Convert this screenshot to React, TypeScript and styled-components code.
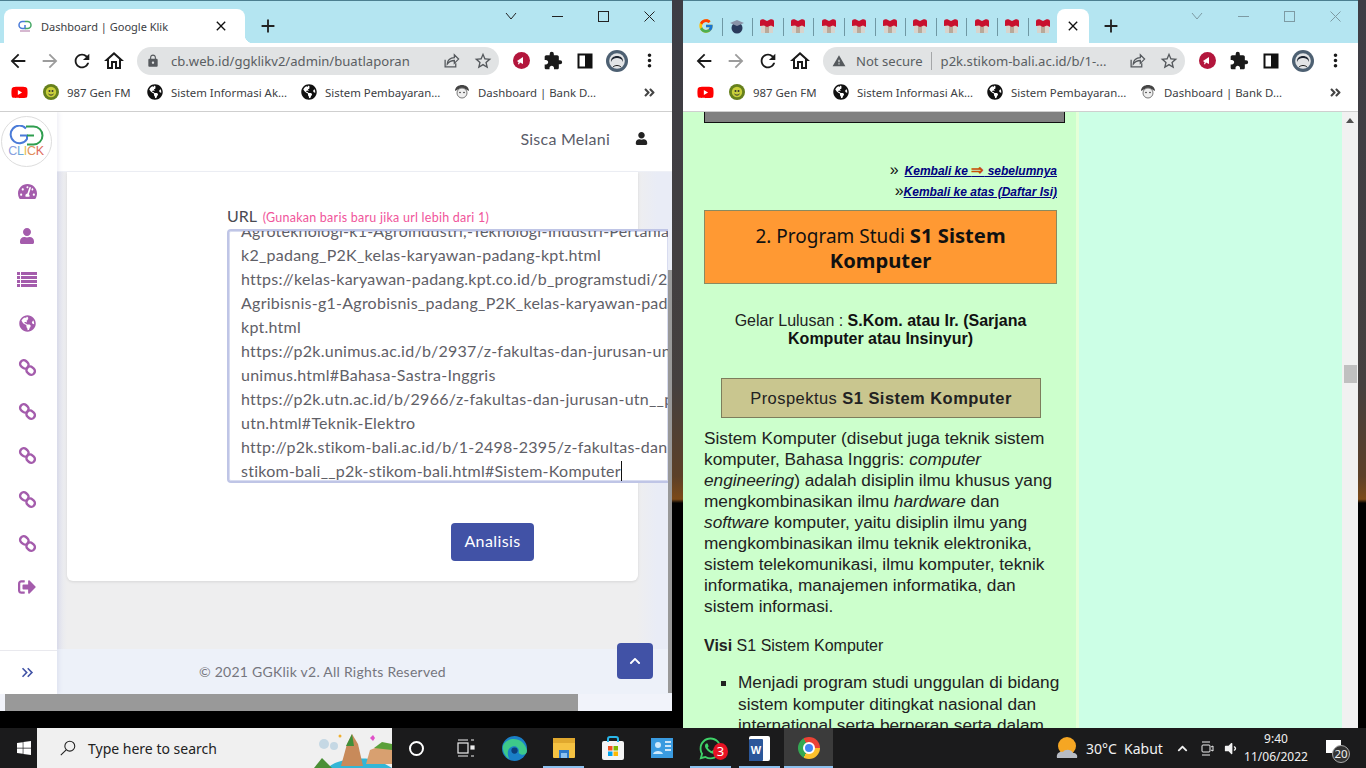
import React from "react";
import styled, { createGlobalStyle } from "styled-components";
import {
  MdArrowBack, MdArrowForward, MdRefresh, MdOutlineHome, MdLock, MdStarBorder, MdExtension, MdMoreVert, MdWarning, MdClose, MdAdd,
  MdKeyboardDoubleArrowRight,
} from "react-icons/md";
import { FaTachometerAlt, FaUser, FaGlobeAmericas, FaSignOutAlt, FaYoutube, FaWindows, FaWhatsapp, FaAngleDoubleRight, FaChevronUp, FaVolumeDown } from "react-icons/fa";
import { FcGoogle } from "react-icons/fc";

const Global = createGlobalStyle`
  html, body { margin: 0; padding: 0; width: 1366px; height: 768px; overflow: hidden; background: #000; }
  * { box-sizing: border-box; }
`;

const UI = `"Noto Sans", "Open Sans", sans-serif`;
const NUN = `"Lato", "Open Sans", sans-serif`;
const ARIAL = `"Liberation Sans", Arial, sans-serif`;

const Desktop = styled.div`
  position: relative; width: 1366px; height: 768px; overflow: hidden;
  background: linear-gradient(180deg, #3d3d45 0, #45403f 50%, #5c4028 62%, #7c4a18 65%, #000 65.5%);
`;
const Win = styled.div<{ $x: number; $w: number; $h: number }>`
  position: absolute; left: ${p => p.$x}px; top: 0; width: ${p => p.$w}px; height: ${p => p.$h}px;
  display: flex; flex-direction: column; overflow: hidden; background: #fff;
`;
const TitleBar = styled.div<{ $pl?: number }>`
  height: 43px; flex: none; background: #b4e5f1; border-top: 1px solid #4c7f90; display: flex; align-items: flex-end; position: relative; padding-left: ${p => p.$pl ?? 0}px;
`;
const Tab = styled.div`
  position: relative; width: 241px; height: 34px; margin-left: 4px; background: #fff; border-radius: 8px 8px 0 0;
  display: flex; align-items: center; padding-left: 13px; font: 11px ${UI}; color: #3c4043;
  &::after { content: ""; position: absolute; right: -8px; bottom: 0; width: 8px; height: 8px;
    background: radial-gradient(circle at 100% 0, transparent 8px, #fff 8.5px); }
`;
const TabTitle = styled.span` margin-left: 8px; width: 172px; white-space: nowrap; `;
const TabClose = styled.span` display: flex; color: #111; font-size: 16px; `;
const NewTab = styled.span<{ $m: number }>` display: flex; height: 34px; align-items: center; margin-left: ${p => p.$m}px; color: #222; font-size: 22px; `;
const MiniTab = styled.div`
  width: 30.6px; height: 34px; display: flex; align-items: center; justify-content: center; position: relative; flex: none;
  & + &::before { content: ""; position: absolute; left: 0; top: 9px; height: 18px; width: 1px; background: #6f98a4; }
`;
const ActiveMini = styled.div`
  width: 32px; height: 34px; margin-left: -1px; flex: none; background: #fff; border-radius: 8px 8px 0 0; display: flex; align-items: center; justify-content: center; color: #111; font-size: 16px;
`;
const Caption = styled.div<{ $dim?: boolean }>`
  position: absolute; top: 0; right: 0; display: flex; height: 30px; color: ${p => (p.$dim ? "#7d9aa3" : "#222")};
`;
const CaptionBtn = styled.span` width: 46px; height: 30px; display: flex; align-items: center; justify-content: center; `;
const Toolbar = styled.div<{ $pl: number }>`
  height: 35px; flex: none; display: flex; align-items: center; padding-left: ${p => p.$pl}px; background: #fff;
`;
const NavBtn = styled.span<{ $off?: boolean; $s?: number }>`
  width: 32px; height: 32px; flex: none; display: flex; align-items: center; justify-content: center; color: ${p => (p.$off ? "#9c9c9c" : "#1a1a1a")}; font-size: ${p => p.$s ?? 22}px;
`;
const Omni = styled.div`
  width: 362px; height: 28px; margin: 0 6px 0 7px; flex: none; border-radius: 14px; background: #e1e3e4; display: flex; align-items: center; padding-left: 8px; font: 13.1px ${UI}; color: #5a5e62; position: relative;
`;
const OmniIcon = styled.span` display: flex; font-size: 14px; width: 15px; justify-content: center; color: #55595d; flex: none; `;
const OmniUrl = styled.span<{ $l: number }>` margin-left: ${p => p.$l}px; white-space: nowrap; `;
const OmniDivider = styled.span` width: 1px; height: 18px; background: #a4a6a8; margin-left: 8px; flex: none; `;
const OmniEnd = styled.div` position: absolute; right: 0; top: 0; height: 28px; display: flex; align-items: center; color: #54585c; `;
const OmniBtn = styled.span` width: 32px; display: flex; justify-content: center; font-size: 20px; `;
const Bookmarks = styled.div<{ $pl: number }>`
  height: 34px; flex: none; display: flex; align-items: center; padding: 0 0 5px ${p => p.$pl}px; font: 11.4px ${UI}; color: #3c4043; border-bottom: 1px solid #cfcfcf; position: relative;
`;
const Mark = styled.div<{ $w: number }>` width: ${p => p.$w}px; flex: none; display: flex; align-items: center; gap: 8px; white-space: nowrap; `;
const MarkMore = styled.span` position: absolute; right: 16px; display: flex; font-size: 13px; color: #444; `;
const ExtBadge = styled.span` width: 17px; height: 17px; border-radius: 50%; background: #b3163c; color: #fff; display: flex; align-items: center; justify-content: center; `;

const Page = styled.div` flex: 1; min-height: 0; display: flex; position: relative; overflow: hidden; `;
const Sidebar = styled.aside`
  width: 57px; flex: none; background: #fff; display: flex; flex-direction: column; align-items: center; position: relative; box-shadow: 2px 0 4px rgba(120,125,170,.12); z-index: 2;
`;
const LogoCircle = styled.div`
  width: 51px; height: 51px; margin: 4px 0 3px -5px; flex: none; border-radius: 50%; border: 1px solid #ddd; background: #fff; display: flex; flex-direction: column; align-items: center; padding-top: 8px;
`;
const LogoText = styled.div` font: 12.5px/11px ${ARIAL}; letter-spacing: -.3px; margin-top: 0; `;
const LogoChar = styled.span<{ $c: string }>` color: ${p => p.$c}; `;
const SideItem = styled.div`
  width: 57px; height: 43.9px; flex: none; display: flex; align-items: center; justify-content: center; color: #a45cac; font-size: 19px; margin-left: -3px;
`;
const SideToggle = styled.div`
  margin-top: auto; width: 57px; height: 44px; border-top: 1px solid #e9e9ee; display: flex; align-items: center; justify-content: center; color: #4153a6; font-size: 15px; padding-right: 3px;
`;
const Content = styled.div` flex: 1; min-width: 0; display: flex; flex-direction: column; background: #e6e8f2; `;
const TopNav = styled.div`
  height: 60px; flex: none; background: #fff; border-bottom: 1px solid #eef0f6; display: flex; align-items: center; justify-content: flex-end; padding: 0 24px 6px 0; gap: 25px; font: 16px ${NUN}; letter-spacing: .25px; color: #5a5c69;
`;
const UserIcon = styled.span` display: flex; font-size: 13px; color: #222; `;
const Main = styled.main`
  flex: 1; min-height: 0; background: linear-gradient(90deg, #e4e6f0 0, #eeeeef 10px, #eeeeef 580px, #e9ecf6 600px); display: flex; flex-direction: column; padding-left: 10px;
`;
const Card = styled.section`
  width: 571px; height: 409px; flex: none; background: #fff; border-radius: 0 0 6px 6px; box-shadow: 0 1px 3px rgba(0,0,0,.1); padding: 34px 0 0 160px; position: relative;
`;
const Label = styled.div` font: 16px/20px ${NUN}; color: #4a4a52; white-space: nowrap; height: 23px; `;
const Hint = styled.span` font-size: 12.5px; letter-spacing: .25px; color: #f0559b; margin-left: 2px; `;
const UrlBox = styled.div`
  width: 441px; height: 254px; background: #fff; border: 2px solid #bfc5e6; border-right: none; border-radius: 4px 0 0 4px; box-shadow: inset 0 0 0 1px #d8dcf0; overflow: hidden; padding: 0 0 0 12px; font: 16px/24px ${NUN}; letter-spacing: .25px; color: #5f6067; white-space: nowrap;
`;
const UrlLines = styled.div` margin-top: -12px; `;
const Caret = styled.span` display: inline-block; width: 1px; height: 20px; background: #111; vertical-align: -4px; `;
const Analyze = styled.button`
  display: block; width: 83px; height: 38px; margin: 40px 0 0 224px; background: #4152a6; color: #fff; border: none; border-radius: 4px; font: 16px ${NUN}; letter-spacing: .4px; padding: 0 0 3px;
`;
const Spacer = styled.div` height: 68px; flex: none; `;
const Footer = styled.footer`
  flex: 1; margin-left: -10px; background: #edf1f9; display: flex; align-items: center; padding: 0 0 0 142px; font: 14px ${NUN}; letter-spacing: .25px; color: #75767e;
`;
const ToTop = styled.div`
  position: absolute; left: 617px; top: 531px; width: 36px; height: 36px; background: #4152a6; border-radius: 4px; display: flex; align-items: center; justify-content: center; color: #fff; font-size: 12px; z-index: 3;
`;
const VThumb = styled.div` position: absolute; right: 0; top: 158px; width: 4px; height: 423px; background: #999; z-index: 4; `;
const HScroll = styled.div` height: 17px; flex: none; background: #f1f3fa; padding-left: 5px; `;
const HThumb = styled.div` width: 573px; height: 17px; background: #999; `;

const RightPage = styled.div` flex: 1; min-height: 0; display: flex; position: relative; overflow: hidden; background: #ccffe6; `;
const Article = styled.article`
  flex: none; background: #ccffcc; padding: 0 0 0 21px; border-right: 3px solid #e4ffd8; box-sizing: content-box; width: 372px; color: #111; font-family: ${ARIAL}; overflow: hidden;
`;
const GrayBar = styled.div` width: 361px; height: 12px; margin-top: -1px; background: #808080; border: 1px solid #111; `;
const BackLinks = styled.div` width: 353px; margin-top: 36px; font-size: 12px; `;
const BackRow = styled.div` display: flex; justify-content: flex-end; align-items: baseline; height: 21px; line-height: 21px; `;
const Quote = styled.span<{ $m: number }>` font-size: 16px; line-height: 21px; margin-right: ${p => p.$m}px; color: #111; `;
const BackLink = styled.a` color: #000080; font-weight: bold; font-style: italic; text-decoration: underline; `;
const Arrow = styled.span` color: #c8500a; font-style: normal; font-size: 15px; line-height: 12px; `;
const OrangeBox = styled.h2`
  width: 353px; height: 74px; margin: 9px 0 0; background: #ff9933; border: 1px solid #8a8a60; text-align: center; font: 400 19px/24px "Noto Sans", Tahoma, sans-serif; color: #111; padding-top: 12px;
  b { font-weight: 700; font-size: 20.2px; }
`;
const Gelar = styled.div` width: 353px; margin-top: 28px; text-align: center; font-size: 16px; line-height: 18px; color: #222; b { color: #111; } `;
const ProspBox = styled.div`
  width: 320px; height: 40px; margin: 30px 0 0 17px; background: #c9c68f; border: 1px solid #7d7d5c; display: flex; align-items: center; justify-content: center; font-size: 16.5px; white-space: pre; letter-spacing: .45px; color: #222;
`;
const Para = styled.p` margin: 10px 0 0; font-size: 17.25px; line-height: 21px; color: #222; white-space: nowrap; `;
const Visi = styled.p` margin: 18px 0 0; font-size: 16px; line-height: 21px; color: #222; `;
const Bullets = styled.ul` margin: 16px 0 0; padding-left: 34px; list-style: square; font-size: 17.25px; line-height: 21.5px; white-space: nowrap; color: #222; `;
const PageScroll = styled.div` position: absolute; right: 0; top: 0; bottom: 0; width: 16px; background: #f1f1f1; display: flex; flex-direction: column; align-items: center; `;
const ScrollUp = styled.span` margin-top: 6px; width: 0; height: 0; border: 4px solid transparent; border-top: none; border-bottom: 5px solid #505050; `;
const ScrollThumb = styled.span` margin-top: 242px; width: 13px; height: 18px; background: #c0c0c0; `;

const Taskbar = styled.div`
  position: absolute; left: 0; right: 0; bottom: 0; height: 40px; background: #1b1b1c; display: flex; z-index: 5; color: #f1f1f1; font: 14px ${UI};
`;
const StartBtn = styled.div` width: 37px; display: flex; align-items: center; justify-content: center; font-size: 16px; color: #fff; padding-left: 11px; `;
const Search = styled.div` width: 355px; background: #f0f0f0; color: #222; display: flex; align-items: center; padding-left: 22px; font-size: 14px; overflow: hidden; position: relative; `;
const SearchLabel = styled.span` margin-left: 11px; `;
const SearchArt = styled.svg` position: absolute; right: 0; top: 0; `;
const Slot = styled.div<{ $on?: boolean; $active?: boolean }>`
  width: 49px; flex: none; position: relative; display: flex; align-items: center; justify-content: center; background: ${p => (p.$active ? "#3b3b3b" : "none")};
  &::after { content: ""; position: absolute; left: ${p => (p.$active ? 0 : "4px")}; right: ${p => (p.$active ? 0 : "4px")}; bottom: 0; height: 2px; background: ${p => (p.$on ? "#8cc0ee" : "transparent")}; }
`;
const CircleGlyph = styled.span` width: 15px; height: 15px; border-radius: 50%; border: 2.5px solid #fff; `;
const ChromeBall = styled.span`
  width: 22px; height: 22px; border-radius: 50%; display: flex; align-items: center; justify-content: center;
  background: conic-gradient(from -30deg, #ea4335 0 120deg, #fbc02d 120deg 240deg, #34a853 240deg 360deg);
  &::after { content: ""; width: 8px; height: 8px; background: #4285f4; border-radius: 50%; border: 2px solid #fff; box-sizing: content-box; }
`;
const WaBadge = styled.span` position: absolute; left: 27px; top: 15px; width: 15px; height: 17px; background: #e81224; border-radius: 50%; color: #fff; font: 13px/17px ${UI}; text-align: center; `;
const WordTile = styled.span` position: relative; width: 21px; height: 25px; display: block; background: #fff; border-radius: 2px; `;
const WordFace = styled.span` position: absolute; left: 0; top: 3px; width: 14px; height: 22px; background: #2b579a; border-radius: 1px; color: #fff; font: bold 11px/22px ${ARIAL}; text-align: center; `;
const Tray = styled.div` position: absolute; right: 0; top: 0; bottom: 0; left: 1048px; display: flex; align-items: center; font-size: 14px; `;
const TrayText = styled.span<{ $w: number }>` width: ${p => p.$w}px; flex: none; white-space: nowrap; `;
const TrayIcon = styled.span<{ $w: number }>` width: ${p => p.$w}px; flex: none; display: flex; justify-content: center; font-size: 15px; `;
const Clock = styled.div` width: 72px; flex: none; text-align: center; font-size: 12px; line-height: 18px; `;
const Notif = styled.div` position: relative; margin-left: 8px; width: 40px; height: 40px; font-size: 12px; `;
const NotifBox = styled.span` position: absolute; left: 6px; top: 12px; width: 15px; height: 13px; background: #fff; `;
const NotifCount = styled.span` position: absolute; left: 12px; top: 17px; width: 18px; height: 18px; border-radius: 50%; background: #333; border: 1px solid #aaa; text-align: center; font-size: 11.5px; line-height: 16px; `;

const Flag = () => (
  <svg width="16" height="16" viewBox="0 0 16 16"><rect x="2" y="6" width="12" height="9" fill="#d8d3cc" /><rect x="6" y="6" width="4" height="9" fill="#b9a99a" /><path d="M1 8V3.500C1 1.500 3 1 5 1.500l3 1.500L11 1.500c2-.5 4 0 4 2V9l-3-1.500-4 1.500L5 7.500z" fill="#c8102e" /></svg>
);
const LinkRings = () => (
  <svg width="19" height="19" viewBox="0 0 24 24" fill="none" stroke="currentColor" strokeWidth="3"><rect x="2.500" y="3.500" width="11" height="9" rx="4.200" transform="rotate(42 8 8)" /><rect x="10.500" y="11.500" width="11" height="9" rx="4.200" transform="rotate(42 16 16)" /></svg>
);
const ListGlyph = () => (
  <svg width="20" height="16" viewBox="0 0 20 16" fill="currentColor">
    {[0, 4, 8, 12].map(y => (
      <g key={y}><rect x="0" y={y} width="3" height="3" /><rect x="4" y={y} width="16" height="3" /></g>
    ))}
  </svg>
);
const SmallLogo = () => (
  <svg width="16" height="16" viewBox="0 0 16 16" fill="none" strokeWidth="1.5"><path d="M8 3.500H5.500a3.500 3.500 0 0 0 0 7H8V7" stroke="#4a7bd8" /><path d="M8 3.500h2.500a3.500 3.500 0 0 1 0 7H8" stroke="#46a866" /><path d="M3 13h10" stroke="#c9a0c0" /></svg>
);
const ShareIcon = () => (
  <svg width="17" height="17" viewBox="0 0 24 24" fill="none" stroke="currentColor" strokeWidth="1.800"><path d="M3 11v10h15v-5" /><path d="M6 17c0-5 4-9 10-9V4l6 6-6 6v-4c-4 0-7 1-10 5z" /></svg>
);
const PanelIcon = () => (
  <svg width="16" height="16" viewBox="0 0 16 16"><rect x="1.500" y="1.500" width="13" height="13" fill="#fff" stroke="#111" strokeWidth="2" /><rect x="8" y="1.500" width="6.500" height="13" fill="#111" /></svg>
);
const Avatar = () => (
  <svg width="22" height="22" viewBox="0 0 22 22"><circle cx="11" cy="11" r="11" fill="#4d6072" /><circle cx="11" cy="11" r="7.800" fill="#e2e4e6" /><path d="M5 12c-1-8 13-8 12 0-1-3-3-4-6-4s-5 1-6 4z" fill="#1c2430" /><path d="M7 17c2-2 6-2 8 0" stroke="#222" fill="none" /></svg>
);
const GenIcon = () => (
  <svg width="16" height="16" viewBox="0 0 16 16"><circle cx="8" cy="8" r="8" fill="#66801c" /><circle cx="8" cy="8" r="5.200" fill="#c8cf3a" /><circle cx="6.500" cy="7" r="1" fill="#333" /><circle cx="9.500" cy="7" r="1" fill="#333" /><path d="M5.500 10c1.500 1.500 3.500 1.500 5 0" stroke="#333" fill="none" /></svg>
);
const FaceIcon = () => (
  <svg width="16" height="16" viewBox="0 0 16 16"><path d="M1 7c0-8 14-8 14 0l-2-1c-3-2-7-2-10 0z" fill="#444" /><circle cx="8" cy="9" r="5" fill="#eee" stroke="#777" /><circle cx="6" cy="8.500" r=".8" fill="#333" /><circle cx="10" cy="8.500" r=".8" fill="#333" /></svg>
);
const GradIcon = () => (
  <svg width="16" height="16" viewBox="0 0 16 16"><circle cx="8" cy="10" r="5.500" fill="#2a3a5c" /><path d="M1 5l7-3 7 3-7 3z" fill="#8a93a8" /></svg>
);
const ExtGlyph = () => (
  <svg width="11" height="11" viewBox="0 0 11 11" fill="#fff"><path d="M1 6l6-4v7L4 7.500 3 9.500 2 9l.6-1.800z" /></svg>
);

function CaptionButtons({ dim }: { dim?: boolean }) {
  const s = { fill: "none", stroke: "currentColor", strokeWidth: 1 } as const;
  return (
    <Caption $dim={dim}>
      <CaptionBtn><svg width="12" height="8" viewBox="0 0 12 8" {...s}><path d="M1 1l5 6 5-6" /></svg></CaptionBtn>
      <CaptionBtn><svg width="11" height="11" viewBox="0 0 11 11" {...s}><path d="M0 5.500h11" /></svg></CaptionBtn>
      <CaptionBtn><svg width="11" height="11" viewBox="0 0 11 11" {...s}><rect x=".5" y=".5" width="10" height="10" /></svg></CaptionBtn>
      <CaptionBtn><svg width="11" height="11" viewBox="0 0 11 11" {...s}><path d="M.5.500l10 10M10.500.500l-10 10" /></svg></CaptionBtn>
    </Caption>
  );
}

function ChromeTop({ url, pl, markPl }: { url: React.ReactNode; pl: number; markPl: number }) {
  return (
    <>
      <Toolbar $pl={pl}>
        <NavBtn><MdArrowBack /></NavBtn>
        <NavBtn $off><MdArrowForward /></NavBtn>
        <NavBtn><MdRefresh /></NavBtn>
        <NavBtn $s={24}><MdOutlineHome /></NavBtn>
        <Omni>
          {url}
          <OmniEnd>
            <OmniBtn><ShareIcon /></OmniBtn>
            <OmniBtn><MdStarBorder /></OmniBtn>
          </OmniEnd>
        </Omni>
        <NavBtn><ExtBadge><ExtGlyph /></ExtBadge></NavBtn>
        <NavBtn $s={20}><MdExtension /></NavBtn>
        <NavBtn><PanelIcon /></NavBtn>
        <NavBtn><Avatar /></NavBtn>
        <NavBtn $s={21}><MdMoreVert /></NavBtn>
      </Toolbar>
      <Bookmarks $pl={markPl}>
        <Mark $w={32}><FaYoutube color="#f00" size={17} /></Mark>
        <Mark $w={104}><GenIcon />987 Gen FM</Mark>
        <Mark $w={154}><FaGlobeAmericas size={16} color="#111" />Sistem Informasi Ak...</Mark>
        <Mark $w={153}><FaGlobeAmericas size={16} color="#111" />Sistem Pembayaran...</Mark>
        <Mark $w={150}><FaceIcon />Dashboard | Bank D...</Mark>
        <MarkMore><FaAngleDoubleRight /></MarkMore>
      </Bookmarks>
    </>
  );
}

const urls = [
  "Agroteknologi-k1-Agroindustri,-Teknologi-Industri-Pertanian",
  "k2_padang_P2K_kelas-karyawan-padang-kpt.html",
  "https://kelas-karyawan-padang.kpt.co.id/b_programstudi/2/$2",
  "Agribisnis-g1-Agrobisnis_padang_P2K_kelas-karyawan-padang-",
  "kpt.html",
  "https://p2k.unimus.ac.id/b/2937/z-fakultas-dan-jurusan-unimus",
  "unimus.html#Bahasa-Sastra-Inggris",
  "https://p2k.utn.ac.id/b/2966/z-fakultas-dan-jurusan-utn__p2k-",
  "utn.html#Teknik-Elektro",
  "http://p2k.stikom-bali.ac.id/b/1-2498-2395/z-fakultas-dan-jurusan",
];

export default function App() {
  return (
    <Desktop>
      <Global />
      <Win $x={0} $w={672} $h={711}>
        <TitleBar>
          <Tab><SmallLogo /><TabTitle>Dashboard | Google Klik</TabTitle><TabClose><MdClose /></TabClose></Tab>
          <NewTab $m={12}><MdAdd /></NewTab>
          <CaptionButtons />
        </TitleBar>
        <ChromeTop pl={2} markPl={11} url={<><OmniIcon><MdLock /></OmniIcon><OmniUrl $l={11}>cb.web.id/ggklikv2/admin/buatlaporan</OmniUrl></>} />
        <Page>
          <Sidebar>
            <LogoCircle>
              <svg width="37" height="21" viewBox="0 0 37 21" fill="none" strokeWidth="2"><path d="M18 3.500A8.800 8.800 0 1 0 19 14V10.500H12" stroke="#4a7bd8" /><path d="M18 1.500h7.500a9 9 0 0 1 0 18H19" stroke="#2f9e4f" /><path d="M19 10.500h7" stroke="#2f9e4f" /></svg>
              <LogoText><LogoChar $c="#8a9fe0">C</LogoChar><LogoChar $c="#6aa8d8">L</LogoChar><LogoChar $c="#e8c04a">I</LogoChar><LogoChar $c="#e0905a">C</LogoChar><LogoChar $c="#e06a5a">K</LogoChar></LogoText>
            </LogoCircle>
            <SideItem><FaTachometerAlt /></SideItem>
            <SideItem><FaUser size={16} /></SideItem>
            <SideItem><ListGlyph /></SideItem>
            <SideItem><FaGlobeAmericas size={17} /></SideItem>
            {[0, 1, 2, 3, 4].map(i => <SideItem key={i}><LinkRings /></SideItem>)}
            <SideItem><FaSignOutAlt size={18} /></SideItem>
            <SideToggle><MdKeyboardDoubleArrowRight size={19} /></SideToggle>
          </Sidebar>
          <Content>
            <TopNav>Sisca Melani<UserIcon><FaUser /></UserIcon></TopNav>
            <Main>
              <Card>
                <Label>URL <Hint>(Gunakan baris baru jika url lebih dari 1)</Hint></Label>
                <UrlBox>
                  <UrlLines>
                    {urls.map(u => <div key={u}>{u}</div>)}
                    <div>stikom-bali__p2k-stikom-bali.html#Sistem-Komputer<Caret /></div>
                  </UrlLines>
                </UrlBox>
                <Analyze>Analisis</Analyze>
              </Card>
              <Spacer />
              <Footer>© 2021 GGKlik v2. All Rights Reserved</Footer>
            </Main>
          </Content>
          <ToTop><FaChevronUp /></ToTop>
          <VThumb />
        </Page>
        <HScroll><HThumb /></HScroll>
      </Win>

      <Win $x={683} $w={675} $h={728}>
        <TitleBar $pl={8}>
          <MiniTab><FcGoogle size={16} /></MiniTab>
          <MiniTab><GradIcon /></MiniTab>
          {[...Array(10)].map((_, i) => <MiniTab key={i}><Flag /></MiniTab>)}
          <ActiveMini><MdClose /></ActiveMini>
          <NewTab $m={11}><MdAdd /></NewTab>
          <CaptionButtons dim />
        </TitleBar>
        <ChromeTop pl={5} markPl={14} url={<><OmniIcon><MdWarning /></OmniIcon><OmniUrl $l={10}>Not secure</OmniUrl><OmniDivider /><OmniUrl $l={9}>p2k.stikom-bali.ac.id/b/1-...</OmniUrl></>} />
        <RightPage>
          <Article>
            <GrayBar />
            <BackLinks>
              <BackRow><Quote $m={6}>»</Quote><BackLink>Kembali ke <Arrow>⇒</Arrow> sebelumnya</BackLink></BackRow>
              <BackRow><Quote $m={0}>»</Quote><BackLink>Kembali ke atas (Daftar Isi)</BackLink></BackRow>
            </BackLinks>
            <OrangeBox>2. Program Studi <b>S1 Sistem<br />Komputer</b></OrangeBox>
            <Gelar>Gelar Lulusan : <b>S.Kom. atau Ir. (Sarjana<br />Komputer atau Insinyur)</b></Gelar>
            <ProspBox>Prospektus <b>S1 Sistem Komputer</b></ProspBox>
            <Para>
              Sistem Komputer (disebut juga teknik sistem<br />
              komputer, Bahasa Inggris: <i>computer</i><br />
              <i>engineering</i>) adalah disiplin ilmu khusus yang<br />
              mengkombinasikan ilmu <i>hardware</i> dan<br />
              <i>software</i> komputer, yaitu disiplin ilmu yang<br />
              mengkombinasikan ilmu teknik elektronika,<br />
              sistem telekomunikasi, ilmu komputer, teknik<br />
              informatika, manajemen informatika, dan<br />
              sistem informasi.
            </Para>
            <Visi><b>Visi</b> S1 Sistem Komputer</Visi>
            <Bullets>
              <li>Menjadi program studi unggulan di bidang<br />sistem komputer ditingkat nasional dan<br />international serta berperan serta dalam</li>
            </Bullets>
          </Article>
          <PageScroll><ScrollUp /><ScrollThumb /></PageScroll>
        </RightPage>
      </Win>

      <Taskbar>
        <StartBtn><FaWindows /></StartBtn>
        <Search>
          <svg width="18" height="20" viewBox="0 0 20 20" fill="none" stroke="#222" strokeWidth="1.200"><circle cx="12" cy="8" r="5.500" /><path d="M8 12l-6 6" /></svg>
          <SearchLabel>Type here to search</SearchLabel>
          <SearchArt width="78" height="40" viewBox="0 0 78 40">
            <circle cx="10" cy="16" r="5" fill="#c5d8e4" /><circle cx="20" cy="18" r="4" fill="#c5d8e4" />
            <path d="M14 40c6-8 30-12 50-8l14 8z" fill="#33b6d6" />
            <path d="M27 38l6-22 5-10 6 10 5 22z" fill="#c88a5a" /><path d="M32 18l6-12 2 12z" fill="#3f8f3a" />
            <path d="M52 36l4-14 10-4 12 2v16z" fill="#d8a070" /><path d="M60 20l8-6 10 2v6z" fill="#5aa03a" />
            <path d="M0 40l8-10 10 10z" fill="#4a8f36" />
            <path d="M56 10l3-3 2 3-2 3z" fill="#e050c8" />
            <circle cx="26" cy="8" r="1.500" fill="#f0b030" />
          </SearchArt>
        </Search>
        <Slot><CircleGlyph /></Slot>
        <Slot>
          <svg width="18" height="20" viewBox="0 0 18 20" fill="none" stroke="#eee" strokeWidth="1.200"><rect x="1" y="5" width="10" height="10" /><path d="M1 2h10M1 18h10M14 2h3M14 18h3" /><rect x="14" y="8" width="3" height="3" fill="#eee" /></svg>
        </Slot>
        <Slot>
          <svg width="25" height="25" viewBox="0 0 24 24"><circle cx="12" cy="12" r="12" fill="#1a7fc7" /><path d="M1 9c4-9 20-9 23 5 0 5-6 5-8 2 1-4-2-7-6-6-4 1-6 6-3 12C3 20 0 14 1 9z" fill="#3ec98a" /><circle cx="12" cy="14" r="3" fill="#0c3f7a" /></svg>
        </Slot>
        <Slot $on>
          <svg width="22" height="24" viewBox="0 0 22 24"><rect x="0" y="2" width="22" height="20" rx="1" fill="#f5c242" /><rect x="0" y="2" width="22" height="5" fill="#e0a82e" /><rect x="6" y="14" width="10" height="8" fill="#2e78c8" /><rect x="8" y="17" width="6" height="5" fill="#8cc0ee" /></svg>
        </Slot>
        <Slot>
          <svg width="22" height="24" viewBox="0 0 22 24"><rect x="0" y="5" width="22" height="19" rx="2" fill="#f4f4f4" /><path d="M6 6V3a2 2 0 0 1 2-2h6a2 2 0 0 1 2 2v3" fill="none" stroke="#29b6e8" strokeWidth="2" /><rect x="6" y="10" width="4.500" height="4.500" fill="#f25022" /><rect x="11.500" y="10" width="4.500" height="4.500" fill="#7fba00" /><rect x="6" y="15.500" width="4.500" height="4.500" fill="#00a4ef" /><rect x="11.500" y="15.500" width="4.500" height="4.500" fill="#ffb900" /></svg>
        </Slot>
        <Slot>
          <svg width="22" height="20" viewBox="0 0 22 20"><rect width="22" height="20" fill="#3a9be0" /><circle cx="7" cy="7" r="3" fill="#cfeafc" /><path d="M2 16c1-4 9-4 10 0z" fill="#cfeafc" /><path d="M14 4h6M14 8h6M14 12h6" stroke="#fff" strokeWidth="1.500" /></svg>
        </Slot>
        <Slot $on>
          <FaWhatsapp size={25} color="#3fd268" />
          <WaBadge>3</WaBadge>
        </Slot>
        <Slot $on>
          <WordTile><WordFace>W</WordFace></WordTile>
        </Slot>
        <Slot $on $active><ChromeBall /></Slot>
        <Tray>
          <TrayIcon $w={38}>
            <svg width="22" height="24" viewBox="0 0 22 24"><circle cx="11" cy="10" r="9" fill="#f5a623" /><path d="M1 22c-1-5 3-7 6-6 2-3 8-3 10 1 3 0 5 2 4 5z" fill="#b8bcc4" /></svg>
          </TrayIcon>
          <TrayText $w={38}>30°C</TrayText>
          <TrayText $w={46}>Kabut</TrayText>
          <TrayIcon $w={24}><FaChevronUp size={11} /></TrayIcon>
          <TrayIcon $w={26}>
            <svg width="14" height="16" viewBox="0 0 14 16" fill="none" stroke="#eee"><rect x="2" y="5" width="8" height="7" rx="1" /><path d="M2 2h8M2 15h8M11 7l2-1v5l-2-1" /></svg>
          </TrayIcon>
          <TrayIcon $w={20}><FaVolumeDown /></TrayIcon>
          <Clock>9:40<br />11/06/2022</Clock>
          <Notif><NotifBox /><NotifCount>20</NotifCount></Notif>
        </Tray>
      </Taskbar>
    </Desktop>
  );
}
